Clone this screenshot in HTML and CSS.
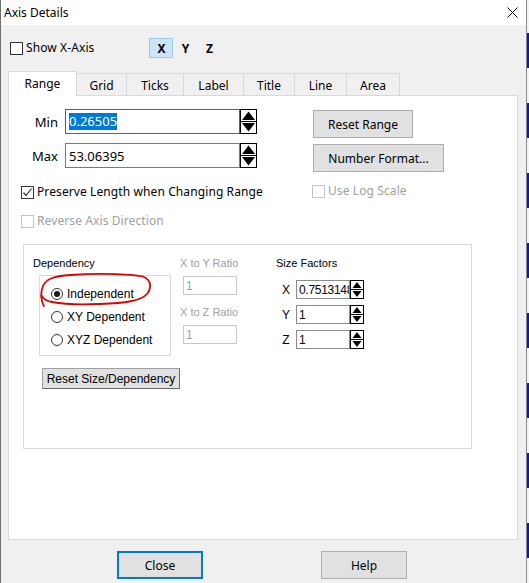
FILE: index.html
```html
<!DOCTYPE html>
<html>
<head>
<meta charset="utf-8">
<link rel="stylesheet" href="styles.css">
</head>
<body>
<div class="dialog">
  <div class="titlebar">
    <span class="title">Axis Details</span>
    <svg class="close-x" width="11" height="11" viewBox="0 0 11 11"><path d="M0.5 0.5 L10.5 10.5 M10.5 0.5 L0.5 10.5" stroke="#000" stroke-width="1"/></svg>
  </div>
  <div class="toprow">
    <span class="cb"></span>
    <span class="cb-label">Show X-Axis</span>
    <div class="xyz">
      <span class="axis sel">X</span>
      <span class="axis">Y</span>
      <span class="axis">Z</span>
    </div>
  </div>
  <div class="tabs">
    <div class="tab active t1">Range</div>
    <div class="tab t2">Grid</div>
    <div class="tab t3">Ticks</div>
    <div class="tab t4">Label</div>
    <div class="tab t5">Title</div>
    <div class="tab t6">Line</div>
    <div class="tab t7">Area</div>
  </div>
  <div class="panel">
    <div class="toparea">
      <div class="fields">
        <div class="frow">
          <span class="flabel">Min</span>
          <div class="input focus"><span class="selected">0.26505</span></div>
          <svg class="spin" width="17" height="25" viewBox="0 0 17 25"><rect x="0.5" y="0.5" width="16" height="24" fill="#fff" stroke="#000"/><path d="M2 11 L8.5 2.5 L15 11 Z M2 14 L8.5 22.5 L15 14 Z" fill="#000"/><path d="M1 12.5 H16" stroke="#000"/></svg>
        </div>
        <div class="frow second">
          <span class="flabel">Max</span>
          <div class="input">53.06395</div>
          <svg class="spin" width="17" height="25" viewBox="0 0 17 25"><rect x="0.5" y="0.5" width="16" height="24" fill="#fff" stroke="#000"/><path d="M2 11 L8.5 2.5 L15 11 Z M2 14 L8.5 22.5 L15 14 Z" fill="#000"/><path d="M1 12.5 H16" stroke="#000"/></svg>
        </div>
        <div class="crow preserve">
          <span class="cb checked"><svg width="11" height="11" viewBox="0 0 11 11"><path d="M1.5 5.5 L4 8.5 L9.5 1.5" fill="none" stroke="#333" stroke-width="1.2"/></svg></span>
          <span class="cb-label">Preserve Length when Changing Range</span>
        </div>
        <div class="crow reverse disabled">
          <span class="cb"></span>
          <span class="cb-label">Reverse Axis Direction</span>
        </div>
      </div>
      <div class="side">
        <button class="btn reset-range">Reset Range</button>
        <button class="btn numfmt">Number Format...</button>
        <div class="crow logscale disabled">
          <span class="cb"></span>
          <span class="cb-label">Use Log Scale</span>
        </div>
      </div>
    </div>
    <div class="group">
      <div class="col dep">
        <div class="glabel">Dependency</div>
        <div class="radiobox">
          <div class="rrow"><span class="radio on"></span><span>Independent</span></div>
          <div class="rrow"><span class="radio"></span><span>XY Dependent</span></div>
          <div class="rrow"><span class="radio"></span><span>XYZ Dependent</span></div>
        </div>
        <button class="cbtn">Reset Size/Dependency</button>
      </div>
      <div class="col ratio">
        <div class="glabel dis">X to Y Ratio</div>
        <div class="sinput dis">1</div>
        <div class="glabel dis zlabel">X to Z Ratio</div>
        <div class="sinput dis">1</div>
      </div>
      <div class="col size">
        <div class="glabel">Size Factors</div>
        <div class="srow first">
          <span class="slabel">X</span>
          <div class="sinput">0.7513148</div>
          <svg class="sspin" width="14" height="19" viewBox="0 0 14 19"><rect x="0.5" y="0.5" width="13" height="18" fill="#fff" stroke="#000"/><path d="M2.5 8 L7 2 L11.5 8 Z M2.5 11 L7 17 L11.5 11 Z" fill="#000"/><path d="M1 9.5 H13" stroke="#000"/></svg>
        </div>
        <div class="srow">
          <span class="slabel">Y</span>
          <div class="sinput">1</div>
          <svg class="sspin" width="14" height="19" viewBox="0 0 14 19"><rect x="0.5" y="0.5" width="13" height="18" fill="#fff" stroke="#000"/><path d="M2.5 8 L7 2 L11.5 8 Z M2.5 11 L7 17 L11.5 11 Z" fill="#000"/><path d="M1 9.5 H13" stroke="#000"/></svg>
        </div>
        <div class="srow">
          <span class="slabel">Z</span>
          <div class="sinput">1</div>
          <svg class="sspin" width="14" height="19" viewBox="0 0 14 19"><rect x="0.5" y="0.5" width="13" height="18" fill="#fff" stroke="#000"/><path d="M2.5 8 L7 2 L11.5 8 Z M2.5 11 L7 17 L11.5 11 Z" fill="#000"/><path d="M1 9.5 H13" stroke="#000"/></svg>
        </div>
      </div>
      <svg class="annot" width="114" height="38" viewBox="0 0 114 38"><path d="M4 34 C1 29, 0 21, 3 14 C6 7, 14 4, 30 3 C60 1, 95 2, 104 5 C111 8, 112 16, 107 22 C101 29, 85 31, 60 32 C40 33, 22 32, 12 30 C7 29, 3 27, 2 24" fill="none" stroke="#e00000" stroke-width="1.8" stroke-linecap="round"/></svg>
    </div>
  </div>
  <div class="bottom">
    <button class="btn close">Close</button>
    <button class="btn help">Help</button>
  </div>
</div>
<div class="strip"></div>
</body>
</html>
```

FILE: styles.css
```css
html, body {
  margin: 0;
  padding: 0;
}
body {
  display: flex;
  width: 529px;
  height: 583px;
  overflow: hidden;
  background: #f0f0f0;
  font-family: "Noto Sans", "Liberation Sans", sans-serif;
  font-size: 12px;
  color: #000;
}
.dialog {
  width: 527px;
  height: 583px;
  box-sizing: border-box;
  border-left: 1px solid #6e6e6e;
  border-right: 1px solid #8a8a8a;
  background: #f0f0f0;
  position: relative;
}
.strip {
  width: 2px;
  height: 583px;
  background: repeating-linear-gradient(to bottom, #f4f4f4 0px, #f4f4f4 33px, #14149e 33px, #14149e 68px, #f4f4f4 68px, #f4f4f4 70px);
}
.titlebar {
  height: 25px;
  background: #fff;
  display: flex;
  align-items: center;
  padding-left: 3px;
  position: relative;
}
.title {
  font-size: 12px;
  line-height: 14px;
}
.close-x {
  position: absolute;
  left: 506px;
  top: 7px;
}
.toprow {
  display: flex;
  align-items: center;
  height: 20px;
  margin-top: 13px;
}
.cb {
  width: 13px;
  height: 13px;
  box-sizing: border-box;
  border: 1px solid #333;
  background: #fff;
  flex: none;
  display: inline-flex;
  align-items: center;
  justify-content: center;
}
.toprow .cb {
  margin-left: 9px;
}
.cb-label {
  margin-left: 3px;
  line-height: 14px;
  letter-spacing: 0.1px;
}
.xyz {
  display: flex;
  margin-left: 55px;
  height: 20px;
  align-items: center;
}
.axis {
  width: 24px;
  height: 20px;
  box-sizing: border-box;
  display: flex;
  align-items: center;
  justify-content: center;
  font-weight: bold;
  font-size: 12px;
}
.axis.sel {
  background: #cce4f7;
  border: 1px solid #99c9ef;
}
.tabs {
  display: flex;
  align-items: flex-end;
  margin-top: 13px;
  margin-left: 7px;
  height: 24px;
  position: relative;
  z-index: 2;
}
.tab {
  height: 22px;
  box-sizing: border-box;
  border: 1px solid #d9d9d9;
  border-bottom: none;
  background: #f0f0f0;
  display: flex;
  align-items: center;
  justify-content: center;
  margin-left: -1px;
  padding-top: 1px;
}
.tab.active {
  height: 25px;
  margin-bottom: -1px;
  background: #fff;
  margin-left: 0;
  padding-bottom: 3px;
}
.t1 { width: 69px; }
.t2 { width: 51px; }
.t3 { width: 58px; }
.t4 { width: 61px; }
.t5 { width: 52px; }
.t6 { width: 53px; }
.t7 { width: 54px; }
.panel {
  margin-left: 7px;
  width: 510px;
  height: 445px;
  box-sizing: border-box;
  border: 1px solid #d9d9d9;
  background: #fff;
  padding-top: 13px;
  position: relative;
}
.toparea {
  display: flex;
}
.fields {
  width: 304px;
}
.frow {
  display: flex;
  align-items: center;
  height: 25px;
}
.frow.second {
  margin-top: 9px;
}
.flabel {
  width: 49px;
  text-align: right;
  margin-right: 7px;
  font-size: 13px;
}
.input {
  width: 175px;
  height: 25px;
  box-sizing: border-box;
  border: 1px solid #7a7a7a;
  display: flex;
  align-items: center;
  padding-left: 3px;
  font-size: 13px;
}
.input.focus {
  border-color: #0078d7;
}
.selected {
  background: #0078d7;
  color: #fff;
  line-height: 17px;
}
.spin {
  display: block;
  flex: none;
}
.crow {
  display: flex;
  align-items: center;
  height: 14px;
}
.crow.preserve {
  margin-top: 17px;
  margin-left: 12px;
}
.crow.reverse {
  margin-top: 15px;
  margin-left: 12px;
}
.disabled .cb {
  border-color: #c4c4c4;
}
.disabled .cb-label {
  color: #a0a0a0;
}
.side {
  display: flex;
  flex-direction: column;
  align-items: flex-start;
}
.btn {
  font-family: "Noto Sans", "Liberation Sans", sans-serif;
  font-size: 12px;
  background: #e1e1e1;
  border: 1px solid #adadad;
  box-sizing: border-box;
  padding: 0;
  color: #000;
}
.reset-range {
  margin-top: 1px;
  width: 100px;
  height: 28px;
}
.numfmt {
  margin-top: 6px;
  width: 131px;
  height: 28px;
}
.crow.logscale {
  margin-top: 12px;
  margin-left: -1px;
}
.group {
  margin-top: 16px;
  margin-left: 14px;
  width: 449px;
  height: 205px;
  box-sizing: border-box;
  border: 1px solid #dcdcdc;
  display: flex;
  position: relative;
  font-family: "Liberation Sans", sans-serif;
  font-size: 11px;
}
.col {
  padding-top: 11px;
}
.dep {
  margin-left: 9px;
  width: 147px;
}
.glabel {
  height: 14px;
  line-height: 14px;
  white-space: nowrap;
}
.glabel.dis, .sinput.dis {
  color: #a0a0a0;
}
.radiobox {
  margin-top: 5px;
  margin-left: 6px;
  width: 132px;
  height: 81px;
  box-sizing: border-box;
  border: 1px solid #dcdcdc;
  padding-top: 11px;
  padding-left: 11px;
}
.rrow {
  display: flex;
  align-items: center;
  height: 14px;
  margin-bottom: 9px;
  font-size: 12px;
}
.radio {
  width: 12px;
  height: 12px;
  box-sizing: border-box;
  border: 1px solid #333;
  border-radius: 50%;
  background: #fff;
  margin-right: 4px;
  display: inline-flex;
  align-items: center;
  justify-content: center;
}
.radio.on::after {
  content: "";
  width: 6px;
  height: 6px;
  border-radius: 50%;
  background: #1a1a1a;
}
.cbtn {
  margin-top: 12px;
  margin-left: 9px;
  width: 138px;
  height: 21px;
  box-sizing: border-box;
  background: #e1e1e1;
  border: 1px solid #a0a0a0;
  border-right-color: #696969;
  border-bottom-color: #696969;
  font-family: "Liberation Sans", sans-serif;
  font-size: 12px;
  padding: 0;
}
.ratio {
  width: 57px;
}
.sinput {
  width: 54px;
  height: 19px;
  box-sizing: border-box;
  border: 1px solid #8a8a8a;
  display: flex;
  align-items: center;
  padding-left: 2px;
  font-size: 12px;
  overflow: hidden;
  white-space: nowrap;
  background: #fff;
}
.ratio .sinput {
  margin-top: 6px;
  margin-left: 3px;
  border-color: #c8c8c8;
}
.ratio .zlabel {
  margin-top: 10px;
}
.size {
  margin-left: 39px;
}
.size .sinput {
  letter-spacing: -0.3px;
}
.srow {
  display: flex;
  align-items: center;
  margin-top: 6px;
}
.srow.first {
  margin-top: 10px;
}
.slabel {
  width: 20px;
  text-align: center;
  font-size: 12px;
}
.sspin {
  display: block;
  flex: none;
}
.annot {
  position: absolute;
  left: 16px;
  top: 27px;
}
.bottom {
  display: flex;
  margin-top: 11px;
}
.close {
  margin-left: 116px;
  width: 86px;
  height: 28px;
  border: 2px solid #0078d7;
}
.help {
  margin-left: 118px;
  width: 86px;
  height: 28px;
}
```
